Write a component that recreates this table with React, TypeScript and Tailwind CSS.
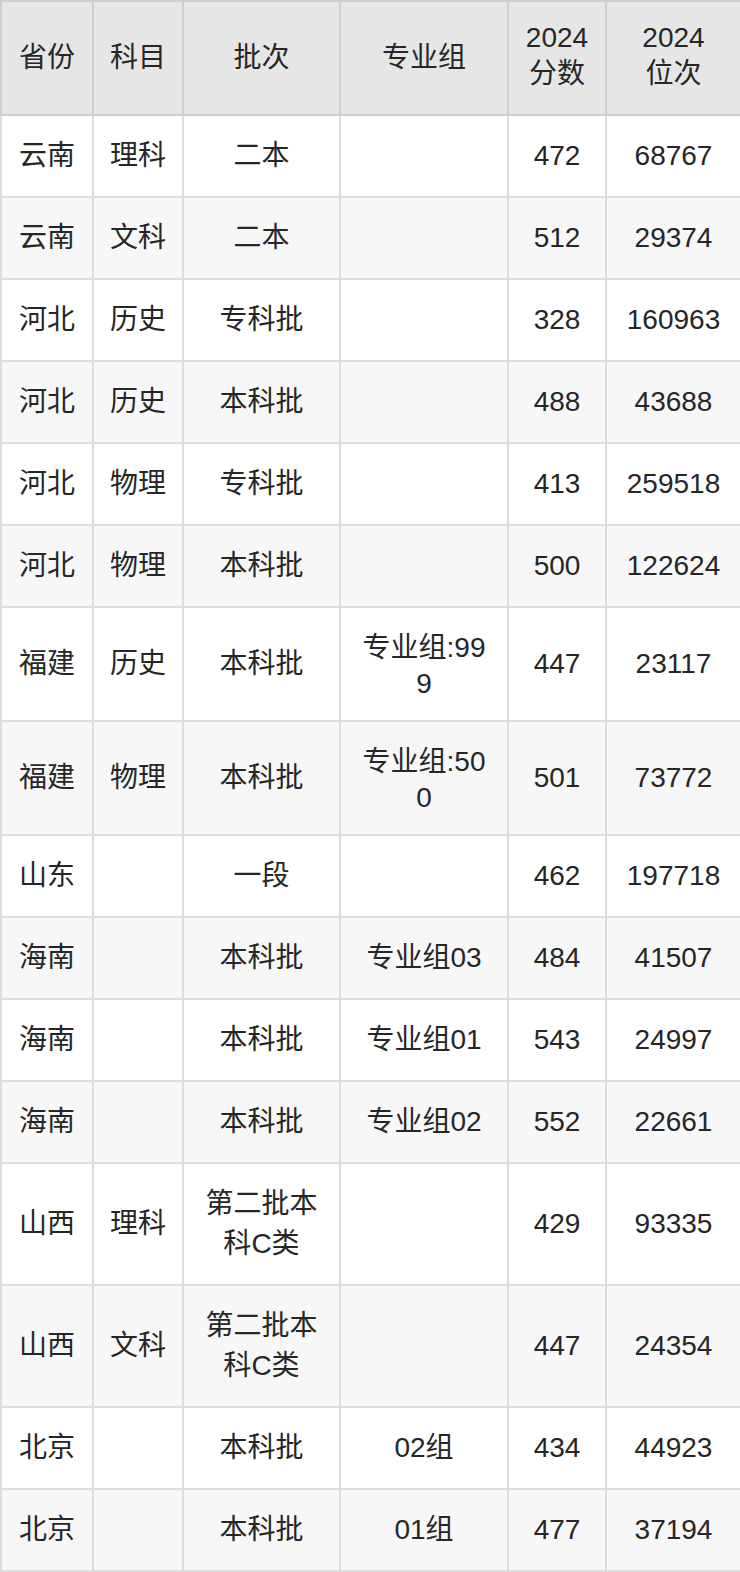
const rows: [string, string, string, string, string, string][] = [
  ['云南', '理科', '二本', '', '472', '68767'],
  ['云南', '文科', '二本', '', '512', '29374'],
  ['河北', '历史', '专科批', '', '328', '160963'],
  ['河北', '历史', '本科批', '', '488', '43688'],
  ['河北', '物理', '专科批', '', '413', '259518'],
  ['河北', '物理', '本科批', '', '500', '122624'],
  ['福建', '历史', '本科批', '专业组:999', '447', '23117'],
  ['福建', '物理', '本科批', '专业组:500', '501', '73772'],
  ['山东', '', '一段', '', '462', '197718'],
  ['海南', '', '本科批', '专业组03', '484', '41507'],
  ['海南', '', '本科批', '专业组01', '543', '24997'],
  ['海南', '', '本科批', '专业组02', '552', '22661'],
  ['山西', '理科', '第二批本科C类', '', '429', '93335'],
  ['山西', '文科', '第二批本科C类', '', '447', '24354'],
  ['北京', '', '本科批', '02组', '434', '44923'],
  ['北京', '', '本科批', '01组', '477', '37194'],
]

// per-column horizontal padding, so long cells wrap like the original
const pad = ['px-[8px]', 'px-[8px]', 'px-[18px]', 'px-[18px]', 'px-[8px]', 'px-[8px]']

// Chinese runs get a taller line than digits, as in the original
function Text({ value }: { value: string }) {
  return (
    <>
      {value.split(/([\u4e00-\u9fff]+)/).map((part, k) =>
        /[\u4e00-\u9fff]/.test(part) ? (
          <span key={k} className="leading-[40px]">
            {part}
          </span>
        ) : (
          part
        ),
      )}
    </>
  )
}

const th = 'border-2 border-[#cfcfcf] px-[8px] py-[20px] text-center font-normal leading-[32px]'

export default function App() {
  return (
    <div className="w-[740px] bg-white font-['Liberation_Sans','Noto_Sans_CJK_SC',sans-serif] text-[28px] text-[#262626]">
      <table className="w-[740px] table-fixed border-collapse">
        <colgroup>
          <col className="w-[92px]" />
          <col className="w-[90px]" />
          <col className="w-[157px]" />
          <col className="w-[168px]" />
          <col className="w-[98px]" />
          <col className="w-[135px]" />
        </colgroup>
        <thead>
          <tr className="bg-[#e6e6e6]">
            <th className={th}><Text value="省份" /></th>
            <th className={th}><Text value="科目" /></th>
            <th className={th}><Text value="批次" /></th>
            <th className={th}><Text value="专业组" /></th>
            <th className={th}>
              2024
              <br />
              <Text value="分数" />
            </th>
            <th className={th}>
              2024
              <br />
              <Text value="位次" />
            </th>
          </tr>
        </thead>
        <tbody>
          {rows.map((r, i) => (
            <tr key={i} className={i % 2 === 0 ? 'bg-white' : 'bg-[#f7f7f7]'}>
              {r.map((c, j) => (
                <td
                  key={j}
                  className={`border-2 border-[#dcdcdc] ${pad[j]} py-[20px] text-center leading-[32px] break-all`}
                >
                  <Text value={c} />
                </td>
              ))}
            </tr>
          ))}
        </tbody>
      </table>
    </div>
  )
}
